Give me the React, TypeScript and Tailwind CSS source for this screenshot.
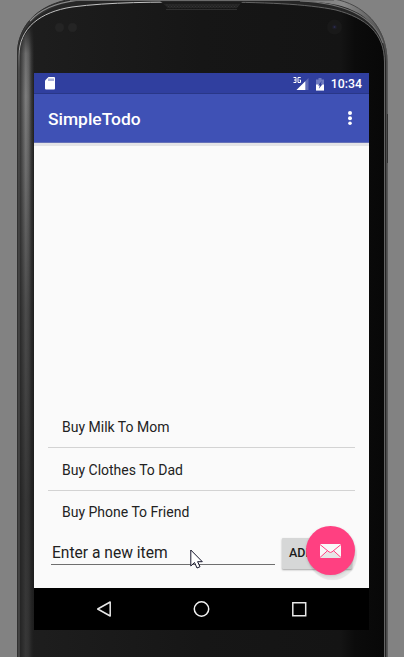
import React from "react";

const items = ["Buy Milk To Mom", "Buy Clothes To Dad", "Buy Phone To Friend"];

function DeviceFrame() {
  return (
    <svg className="absolute inset-0" width="404" height="657" viewBox="0 0 404 657" fill="none">
      <defs>
        <linearGradient id="face" x1="0" x2="1" y1="0" y2="0">
          <stop offset="0" stopColor="#1e1e1e" />
          <stop offset=".5" stopColor="#161616" />
          <stop offset=".88" stopColor="#141414" />
          <stop offset=".92" stopColor="#0b0b0b" />
          <stop offset="1" stopColor="#080808" />
        </linearGradient>
        <linearGradient id="side" x1="19" x2="34" y1="0" y2="0" gradientUnits="userSpaceOnUse">
          <stop offset="0" stopColor="#2b2b2b" />
          <stop offset=".2" stopColor="#505050" />
          <stop offset=".45" stopColor="#7e7e7e" />
          <stop offset=".65" stopColor="#686868" />
          <stop offset=".82" stopColor="#3a3a3a" />
          <stop offset="1" stopColor="#1e1e1e" />
        </linearGradient>
        <linearGradient id="sideFade" x1="0" x2="0" y1="25" y2="500" gradientUnits="userSpaceOnUse">
          <stop offset="0" stopColor="#1c1c1c" stopOpacity=".9" />
          <stop offset=".06" stopColor="#1c1c1c" stopOpacity=".15" />
          <stop offset=".15" stopColor="#1c1c1c" stopOpacity="0" />
          <stop offset=".3" stopColor="#1c1c1c" stopOpacity=".15" />
          <stop offset=".6" stopColor="#1c1c1c" stopOpacity=".5" />
          <stop offset="1" stopColor="#1c1c1c" stopOpacity=".72" />
        </linearGradient>
        <linearGradient id="rim" x1="0" x2="404" y1="0" y2="0" gradientUnits="userSpaceOnUse">
          <stop offset="0" stopColor="#444" />
          <stop offset=".15" stopColor="#2b2b2b" />
          <stop offset=".4" stopColor="#555" />
          <stop offset=".65" stopColor="#666" />
          <stop offset=".85" stopColor="#8a8a8a" />
          <stop offset="1" stopColor="#333" />
        </linearGradient>
        <linearGradient id="edgeLine" x1="0" x2="0" y1="0" y2="200" gradientUnits="userSpaceOnUse">
          <stop offset="0" stopColor="#c4c4c4" />
          <stop offset=".22" stopColor="#b5b5b5" />
          <stop offset=".35" stopColor="#707070" />
          <stop offset="1" stopColor="#606060" />
        </linearGradient>
        <pattern id="mesh" width="3" height="3" patternUnits="userSpaceOnUse">
          <path d="M0 0h1v1H0zM1.500 1.500h1v1h-1z" fill="#343434" />
        </pattern>
      </defs>
      <path d="M17 657V54C17 28 35 5 72 -1H334C362 4 387.500 25 387.500 62V657Z" fill="url(#rim)" />
      <path d="M17.500 657V54C17.500 28 35 5 72 -1" stroke="#303030" />
      <path d="M334 -1C362 4 387 25 387 62V657" stroke="#4a4a4a" />
      <path d="M18 657V56C18 28 37 10 72 2C94 -2 310 -2 332 4C362 9 385.500 28 386 62V657Z" fill="#262626" />
      <path d="M19.500 657V56C19.500 28 40 12 72 7C110 2 155 2 202 2C265 2 307 4 336 10C366 18 384 33 384 62V657Z" fill="url(#face)" />
      <path d="M20 657V50C22 38 27 31 34 26V657Z" fill="url(#side)" />
      <path d="M20 657V50C22 38 27 31 34 26V657Z" fill="url(#sideFade)" />
      <path d="M19 657V56C19 28 40 12 72 7C110 2 155 2 202 2" stroke="url(#edgeLine)" strokeWidth="1" />
      <path d="M202 2C265 2 307 4 336 10C366 18 384.500 33 384.500 62V657" stroke="#646464" />
      <path d="M30 21C40 10 56 3 76 .5H165" stroke="#8c8c8c" strokeWidth="1.200" />
      <path d="M300 1C345 3 374 17 383 43" stroke="#777" strokeWidth="1.200" />
      <path d="M160 1H243L237 8H168Z" fill="#242424" />
      <path d="M165 4H240L236 8.500H168Z" fill="url(#mesh)" />
      <path d="M70 .5H334" stroke="#6a6a6a" />
      <path d="M163 3H241" stroke="#151515" />
      <path d="M166 9.500H237" stroke="#303030" />
      <circle cx="59.500" cy="27.500" r="4.500" fill="#242424" />
      <circle cx="72.500" cy="27.500" r="4.500" fill="#242424" />
      <circle cx="334.500" cy="27" r="7.500" fill="#191919" />
      <circle cx="334.500" cy="27" r="2.500" fill="#1c1c25" />
      <circle cx="334.500" cy="27" r="1" fill="#2c2c50" />
      <path d="M387.500 114V163" stroke="#303030" />
    </svg>
  );
}

function StatusBar() {
  return (
    <div className="flex h-[21px] shrink-0 items-center border-b border-[#293788] bg-[#303f9f] pl-[11px] pr-[7px]">
      <svg width="10" height="13" viewBox="0 0 10 13" className="mt-px">
        <path d="M3.500 0H9Q10 0 10 1V11.500Q10 12.500 9 12.500H1Q0 12.500 0 11.500V3.500Z" fill="#fff" />
        <path d="M4 1.500v2.500M6 1.500v2.500M8 1.500v2.500" stroke="#303f9f" strokeWidth=".8" />
      </svg>
      <div className="ml-auto flex items-center pt-[2px]">
        <svg width="16" height="14" viewBox="0 0 16 14">
          <path d="M15.500 1V13H3.500Z" fill="#5f6bb5" />
          <path d="M12.300 4.200V13H3.500Z" fill="#fff" />
          <path d="M.5 .5H3V3H1M3 3V5.500H.5M7.500 1V.5H5V5.500H7.500V3H6.500" fill="none" stroke="#303f9f" strokeWidth="2.500" />
          <path d="M.5 .5H3V3H1M3 3V5.500H.5M7.500 1V.5H5V5.500H7.500V3H6.500" fill="none" stroke="#fff" strokeWidth="1" />
        </svg>
        <svg className="ml-[7px]" width="8" height="13" viewBox="0 0 8 13">
          <path d="M2.500 0h3v1.500H8V12.500H0V1.500h2.500Z" fill="#6f7bc0" />
          <path d="M0 6.500H8V12.500H0Z" fill="#fff" />
          <path d="M5.800 3L2 7.500H3.800L2.800 10.800L6.500 6.300H4.800Z" fill="#303f9f" />
        </svg>
        <span className="ml-[7px] text-[12.3px] font-medium leading-[20px] text-white">10:34</span>
      </div>
    </div>
  );
}

function AppBar() {
  return (
    <header className="flex h-[49px] shrink-0 items-center justify-between border-b border-[#6571b8] bg-[#3f51b5] pl-[14px] pr-[17px]">
      <h1 className="pt-[2px] text-[17.4px] font-medium leading-6 text-white">SimpleTodo</h1>
      <svg width="4" height="14" viewBox="0 0 4 14" fill="#fff">
        <circle cx="2" cy="2" r="2" /><circle cx="2" cy="7.200" r="2" /><circle cx="2" cy="12.200" r="1.800" />
      </svg>
    </header>
  );
}

function NavBar() {
  return (
    <nav className="flex h-[42px] shrink-0 items-center justify-between bg-black px-[62px]">
      <svg width="16" height="18" viewBox="0 0 16 18" fill="none" stroke="#e8e8e8" strokeWidth="1.500" strokeLinejoin="round">
        <path d="M14.200 2V16L1.700 9Z" />
      </svg>
      <svg width="18" height="18" viewBox="0 0 18 18" fill="none" stroke="#f2f2f2" strokeWidth="1.500">
        <circle cx="8.500" cy="9" r="7.200" />
      </svg>
      <svg width="16" height="16" viewBox="0 0 16 16" fill="none" stroke="#e8e8e8" strokeWidth="1.500">
        <path d="M1.800 1.800H14.700V14.700H1.800Z" />
      </svg>
    </nav>
  );
}

export default function App() {
  return (
    <div className="relative h-[657px] w-[404px] overflow-hidden bg-[#828282] font-[Roboto,sans-serif]">
      <DeviceFrame />
      <div className="relative ml-[34px] mt-[73px] flex h-[557px] w-[335px] flex-col bg-[#fafafa]">
        <StatusBar />
        <AppBar />
        <div className="h-[3px] shrink-0 bg-[#e4e4e7]" />
        <main className="flex min-h-0 flex-1 flex-col px-[14px]">
          <ul className="mt-auto">
            {items.map((item, i) => (
              <li
                key={item}
                className={`flex h-[43px] items-center pl-[14px] text-[14px] text-[#222] ${i < items.length - 1 ? "border-b border-[#d3d3d3] pt-[2px]" : ""}`}
              >
                {item}
              </li>
            ))}
          </ul>
          <div className="flex h-[54px] items-start">
            <input
              className="ml-[3px] mt-[7px] h-[24px] w-[224px] border-b border-[#6f6f6f] bg-transparent p-0 pl-[1px] text-[15.6px] text-[#222] outline-none placeholder:text-[#222]"
              placeholder="Enter a new item"
            />
            <button className="ml-[7px] mt-[4px] h-[31px] w-[70px] rounded-[1px] bg-[#d6d7d7] pl-[7px] text-left text-[12.500px] font-medium text-[#1b1b1b] shadow-[0_1px_2px_rgba(0,0,0,0.35)]">
              ADD IT
            </button>
          </div>
        </main>
        <NavBar />
        <button className="absolute left-[272px] top-[453px] flex size-[49px] items-center justify-center rounded-full bg-[#ff4081] shadow-[2px_5px_1px_rgba(0,0,0,0.08),0_1px_3px_rgba(0,0,0,0.15)]">
          <svg width="21" height="14" viewBox="0 0 21 14">
            <path d="M0 0H21V14H0Z" fill="#f9f9f9" />
            <path d="M0 14L8 7L10.500 9L13 7L21 14Z" fill="#e6e6e6" />
            <path d="M0 .5L9 7.900Q10.500 9 12 7.900L21 .5M0 13.500L7.500 6.700M21 13.500L13.500 6.700" fill="none" stroke="#ff4081" strokeWidth="1" />
          </svg>
        </button>
      </div>
      <svg className="absolute left-[190px] top-[549px]" width="14" height="21" viewBox="0 0 14 21">
        <path d="M.8 1V17L4.500 13.500L7 19L10 17.700L7.600 12.700H12.300Z" fill="#fff" stroke="#15152b" strokeWidth="1" />
      </svg>
    </div>
  );
}
